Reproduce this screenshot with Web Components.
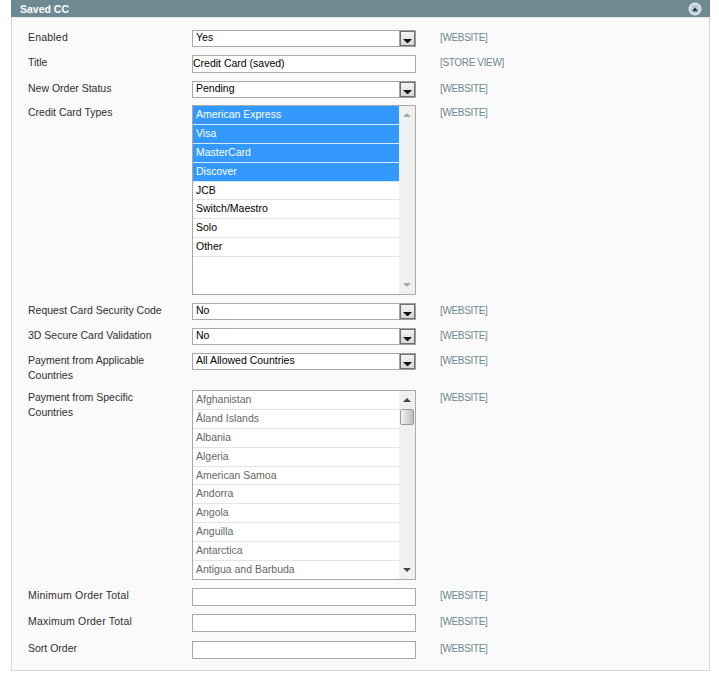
<!DOCTYPE html>
<meta charset="utf-8">
<style>
  html, body { margin: 0; padding: 0; background: #fff; }
  body { font: 10.5px "Liberation Sans", Arial, sans-serif; color: #2f2f2f; }
  .wide { letter-spacing: .2px; }
</style>
<template id="panel-tpl">
  <style>
    :host { display: block; width: 699px; margin-left: 11px; }
    .head { display: flex; align-items: center; justify-content: space-between; height: 17px; padding: 0 8px 0 9px; background: #6f8992; color: #fff; font-weight: bold; }
    .body { background: #fafafa; border: 1px solid #d6d6d6; border-top: 1px solid #e4eaec; padding: 12px 0 11px 16px; }
    svg { display: block; }
  </style>
  <div class="head"><span id="title"></span>
    <svg width="14" height="14" viewBox="0 0 14 14"><circle cx="7" cy="7" r="6.5" fill="#dfe7ea"/><circle cx="7" cy="7" r="4.6" fill="#b9cbd2"/><path d="M4.2 9.2 7 5.2l2.8 4z" fill="#1f3a4a"/></svg>
  </div>
  <div class="body"><slot></slot></div>
</template>
<template id="row-tpl">
  <style>
    :host { display: grid; grid-template-columns: 164px 224px auto; align-items: start; margin-bottom: var(--gap, 0); }
    .label { padding-right: 20px; line-height: 15px; color: #2f2f2f; }
    .scope { padding: 1px 0 0 24px; line-height: 13px; color: #6f8992; font-size: 10px; letter-spacing: -.35px; }
  </style>
  <div class="label"><slot name="label"></slot></div>
  <div><slot></slot></div>
  <div class="scope" id="scope"></div>
</template>
<template id="select-tpl">
  <style>
    :host { display: flex; box-sizing: border-box; height: 17px; border: 1px solid #a9a9a9; background: #fff; color: #000; align-items: stretch; }
    span { flex: 1; padding-left: 3px; line-height: 13px; }
    .btn { flex: none; box-sizing: border-box; width: 17px; height: 17px; margin: -1px -1px -1px 0; border: 1px solid #a0a0a0; box-shadow: inset 0 0 0 1px #707070; background: linear-gradient(#f6f6f6, #d4d4d4); display: flex; align-items: center; justify-content: center; }
    svg { display: block; margin-top: 4px; }
  </style>
  <span><slot></slot></span>
  <div class="btn"><svg width="9" height="4" viewBox="0 0 9 4"><path d="M0 0h9L5 4H4z" fill="#111"/></svg></div>
</template>
<template id="field-tpl">
  <style>
    :host { display: block; box-sizing: border-box; height: 18px; border: 1px solid #a9a9a9; background: #fff; color: #000; line-height: 14px; white-space: nowrap; }
  </style>
  <slot></slot>
</template>
<template id="list-tpl">
  <style>
    :host { display: flex; box-sizing: border-box; height: var(--h, 190px); border: 1px solid #a9a9a9; background: #fff; overflow: hidden; color: #000; }
    :host([scrolled]) { color: #666; }
    .items { flex: 1; min-width: 0; }
    .bar { flex: none; position: relative; width: 16px; background: #f0f0f0; display: flex; flex-direction: column; justify-content: space-between; align-items: center; padding: 7px 0; box-sizing: border-box; }
    .thumb { display: none; position: absolute; left: 1px; top: 18px; width: 14px; height: 16px; box-sizing: border-box; border: 1px solid #9a9a9a; border-radius: 2px; background: linear-gradient(90deg, #f4f4f4, #bdbdc2); }
    :host([scrolled]) .thumb { display: block; }
    svg { display: block; fill: #aaa; }
    :host([scrolled]) svg { fill: #444; }
  </style>
  <div class="items"><slot></slot></div>
  <div class="bar">
    <svg width="8" height="4" viewBox="0 0 8 4"><path d="M0 4h8L4 0z"/></svg>
    <div class="thumb"></div>
    <svg width="8" height="4" viewBox="0 0 8 4"><path d="M0 0h8L4 4z"/></svg>
  </div>
</template>
<template id="option-tpl">
  <style>
    :host { display: block; box-sizing: border-box; height: 18.875px; padding-left: 3px; line-height: 17px; border-bottom: 1px solid #e4e4e4; white-space: nowrap; }
    :host([selected]) { background: #3399ff; color: #fff; border-bottom-color: #d6e9fb; }
  </style>
  <slot></slot>
</template>
<script>
  function 影(el, id) {
    const shadow = el.attachShadow({ mode: "open" });
    shadow.appendChild(document.getElementById(id).content.cloneNode(true));
    return shadow;
  }
  class SavedPanel extends HTMLElement {
    constructor() { super(); 影(this, "panel-tpl"); }
    connectedCallback() {
      this.shadowRoot.getElementById("title").textContent = this.getAttribute("title-text");
    }
  }
  class ConfigRow extends HTMLElement {
    constructor() { super(); 影(this, "row-tpl"); }
    connectedCallback() {
      this.shadowRoot.getElementById("scope").textContent = "[" + this.getAttribute("scope") + "]";
    }
  }
  class SelectBox extends HTMLElement {
    constructor() { super(); 影(this, "select-tpl"); }
  }
  class TextField extends HTMLElement {
    constructor() { super(); 影(this, "field-tpl"); }
  }
  class ListBox extends HTMLElement {
    constructor() { super(); 影(this, "list-tpl"); }
  }
  class ListOption extends HTMLElement {
    constructor() { super(); 影(this, "option-tpl"); }
  }
  customElements.define("saved-panel", SavedPanel);
  customElements.define("config-row", ConfigRow);
  customElements.define("select-box", SelectBox);
  customElements.define("text-field", TextField);
  customElements.define("list-box", ListBox);
  customElements.define("list-option", ListOption);
</script>
<saved-panel title-text="Saved CC">
  <config-row scope="WEBSITE" style="--gap:8px"><span slot="label" class="wide">Enabled</span><select-box>Yes</select-box></config-row>
  <config-row scope="STORE VIEW" style="--gap:8px"><span slot="label">Title</span><text-field>Credit Card (saved)</text-field></config-row>
  <config-row scope="WEBSITE" style="--gap:7px"><span slot="label">New Order Status</span><select-box>Pending</select-box></config-row>
  <config-row scope="WEBSITE" style="--gap:8px"><span slot="label">Credit Card Types</span>
    <list-box style="--h:190px">
      <list-option selected>American Express</list-option>
      <list-option selected>Visa</list-option>
      <list-option selected>MasterCard</list-option>
      <list-option selected>Discover</list-option>
      <list-option>JCB</list-option>
      <list-option>Switch/Maestro</list-option>
      <list-option>Solo</list-option>
      <list-option>Other</list-option>
    </list-box>
  </config-row>
  <config-row scope="WEBSITE" style="--gap:8px"><span slot="label">Request Card Security Code</span><select-box>No</select-box></config-row>
  <config-row scope="WEBSITE" style="--gap:8px"><span slot="label">3D Secure Card Validation</span><select-box>No</select-box></config-row>
  <config-row scope="WEBSITE" style="--gap:7px"><span slot="label">Payment from Applicable Countries</span><select-box>All Allowed Countries</select-box></config-row>
  <config-row scope="WEBSITE" style="--gap:8px"><span slot="label">Payment from Specific Countries</span>
    <list-box style="--h:190px" scrolled>
      <list-option>Afghanistan</list-option>
      <list-option>Åland Islands</list-option>
      <list-option>Albania</list-option>
      <list-option>Algeria</list-option>
      <list-option>American Samoa</list-option>
      <list-option>Andorra</list-option>
      <list-option>Angola</list-option>
      <list-option>Anguilla</list-option>
      <list-option>Antarctica</list-option>
      <list-option>Antigua and Barbuda</list-option>
    </list-box>
  </config-row>
  <config-row scope="WEBSITE" style="--gap:8px"><span slot="label" class="wide">Minimum Order Total</span><text-field></text-field></config-row>
  <config-row scope="WEBSITE" style="--gap:9px"><span slot="label" class="wide">Maximum Order Total</span><text-field></text-field></config-row>
  <config-row scope="WEBSITE"><span slot="label">Sort Order</span><text-field></text-field></config-row>
</saved-panel>
